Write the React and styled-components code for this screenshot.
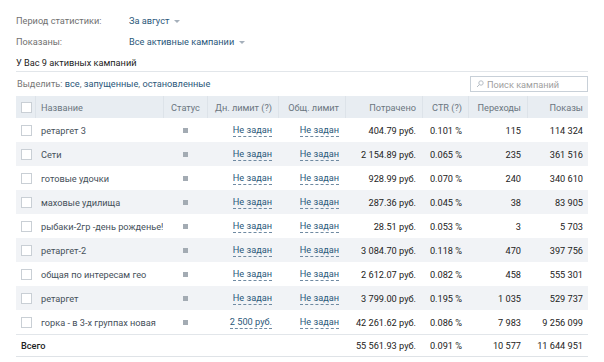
import React from "react";
import styled, { createGlobalStyle } from "styled-components";

const Global = createGlobalStyle`
  html, body { margin: 0; padding: 0; background: #fff; }
  body { font-family: Roboto, "Open Sans", Arial, sans-serif; font-size: 9.2px; color: #333; }
`;

const Page = styled.div`
  padding: 14px 16px 0 16px;
  width: 572px;
`;

const Info = styled.div`
  display: grid;
  grid-template-columns: 113px 1fr;
  row-gap: 8px;
  line-height: 13px;
  margin-bottom: 8px;
`;

const Label = styled.div`
  color: #707070;
`;

const Dropdown = styled.div`
  color: #2b587a;
  display: flex;
  align-items: center;
  gap: 5px;
  &::after {
    content: "";
    border-left: 3px solid transparent;
    border-right: 3px solid transparent;
    border-top: 3px solid #a5b0bb;
    margin-top: 1px;
  }
`;

const Count = styled.div`
  line-height: 13px;
  padding-bottom: 2px;
  border-bottom: 1px solid #e2e6ea;
  color: #222;
`;

const SelectBar = styled.div`
  display: flex;
  justify-content: space-between;
  align-items: center;
  height: 23px;
  padding-left: 1px;
`;

const SelectText = styled.div`
  color: #777;
  & span { color: #2b587a; }
`;

const Search = styled.div`
  width: 111px;
  height: 14px;
  border: 1px solid #c8d0d8;
  display: flex;
  align-items: center;
  gap: 3px;
  padding-left: 5px;
  color: #a0a0a0;
  margin-top: 1px;
`;

const Table = styled.div`
  display: grid;
  grid-template-columns: 19px 128px 44px 71px 67px 77px 46px 59px 61px;
  margin-top: 1px;
`;

const Row = styled.div`
  display: contents;
  & > div {
    height: ${p => (p.$head ? 22 : 24)}px;
    background: ${p => (p.$head ? "#e8edf2" : p.$alt ? "#f1f3f6" : "#fff")};
    ${p => p.$total && "border-top: 1px solid #e2e6ea; border-bottom: 1px solid #dfe3e7; height: 23px;"}
  }
`;

const Cell = styled.div`
  display: flex;
  align-items: center;
  justify-content: ${p => (p.$align === "right" ? "flex-end" : p.$align === "center" ? "center" : "flex-start")};
  padding: 0 ${p => p.$pr ?? 6}px 0 ${p => p.$pl ?? 5}px;
  color: ${p => (p.$head ? "#6b7680" : p.$name ? "#45505a" : "#222")};
  font-weight: ${p => (p.$bold ? 500 : 400)};
  box-sizing: border-box;
  white-space: nowrap;
  overflow: hidden;
  border-left: ${p => (p.$sep ? "1px solid #dde3e9" : "none")};
`;

const Check = styled.span`
  width: 9px;
  height: 9px;
  border: 1px solid #c9cfd5;
  background: #fff;
  display: inline-block;
`;

const Dot = styled.span`
  width: 5px;
  height: 5px;
  background: #a3abb3;
  display: inline-block;
`;

const Dashed = styled.span`
  color: #2b587a;
  border-bottom: 1px dashed #6f8aa2;
  line-height: 12px;
`;

const rows = [
  ["ретаргет 3", "Не задан", "404.79 руб.", "0.101 %", "115", "114 324"],
  ["Сети", "Не задан", "2 154.89 руб.", "0.065 %", "235", "361 516"],
  ["готовые удочки", "Не задан", "928.99 руб.", "0.070 %", "240", "340 610"],
  ["маховые удилища", "Не задан", "287.36 руб.", "0.045 %", "38", "83 905"],
  ["рыбаки-2гр -день рожденье!", "Не задан", "28.51 руб.", "0.053 %", "3", "5 703"],
  ["ретаргет-2", "Не задан", "3 084.70 руб.", "0.118 %", "470", "397 756"],
  ["общая по интересам гео", "Не задан", "2 612.07 руб.", "0.082 %", "458", "555 301"],
  ["ретаргет", "Не задан", "3 799.00 руб.", "0.195 %", "1 035", "529 737"],
  ["горка - в 3-х группах новая", "2 500 руб.", "42 261.62 руб.", "0.086 %", "7 983", "9 256 099"],
];

const SearchIcon = () => (
  <svg width="8" height="8" viewBox="0 0 8 8">
    <circle cx="5" cy="3" r="2.2" fill="none" stroke="#b5bdc5" strokeWidth="1" />
    <line x1="3.4" y1="4.6" x2="1" y2="7" stroke="#b5bdc5" strokeWidth="1" />
  </svg>
);

export default function App() {
  return (
    <Page>
      <Global />
      <Info>
        <Label>Период статистики:</Label>
        <Dropdown>За август</Dropdown>
        <Label>Показаны:</Label>
        <Dropdown>Все активные кампании</Dropdown>
      </Info>
      <Count>У Вас 9 активных кампаний</Count>
      <SelectBar>
        <SelectText>
          Выделить: <span>все</span>, <span>запущенные</span>, <span>остановленные</span>
        </SelectText>
        <Search>
          <SearchIcon />
          Поиск кампаний
        </Search>
      </SelectBar>
      <Table>
        <Row $head>
          <Cell $head $pl={5} $pr={0}><Check /></Cell>
          <Cell $head $sep>Название</Cell>
          <Cell $head $sep $align="center" $pl={0} $pr={0}>Статус</Cell>
          <Cell $head $sep $align="right">Дн. лимит (?)</Cell>
          <Cell $head $sep $align="right">Общ. лимит</Cell>
          <Cell $head $sep $align="right">Потрачено</Cell>
          <Cell $head $sep $align="right">CTR (?)</Cell>
          <Cell $head $sep $align="right">Переходы</Cell>
          <Cell $head $sep $align="right" $pr={5}>Показы</Cell>
        </Row>
        {rows.map((r, i) => (
          <Row key={i} $alt={i % 2 === 1}>
            <Cell $pl={5} $pr={0}><Check /></Cell>
            <Cell $name $pl={6} $pr={0}>{r[0]}</Cell>
            <Cell $align="center" $pl={0} $pr={0}><Dot /></Cell>
            <Cell $align="right"><Dashed>{r[1]}</Dashed></Cell>
            <Cell $align="right"><Dashed>Не задан</Dashed></Cell>
            <Cell $align="right">{r[2]}</Cell>
            <Cell $align="right">{r[3]}</Cell>
            <Cell $align="right">{r[4]}</Cell>
            <Cell $align="right" $pr={5}>{r[5]}</Cell>
          </Row>
        ))}
        <Row $total>
          <Cell $bold $pl={5} $pr={0} style={{ gridColumn: "span 2" }}>Всего</Cell>
          <Cell />
          <Cell />
          <Cell />
          <Cell $align="right">55 561.93 руб.</Cell>
          <Cell $align="right">0.091 %</Cell>
          <Cell $align="right">10 577</Cell>
          <Cell $align="right" $pr={5}>11 644 951</Cell>
        </Row>
      </Table>
    </Page>
  );
}
